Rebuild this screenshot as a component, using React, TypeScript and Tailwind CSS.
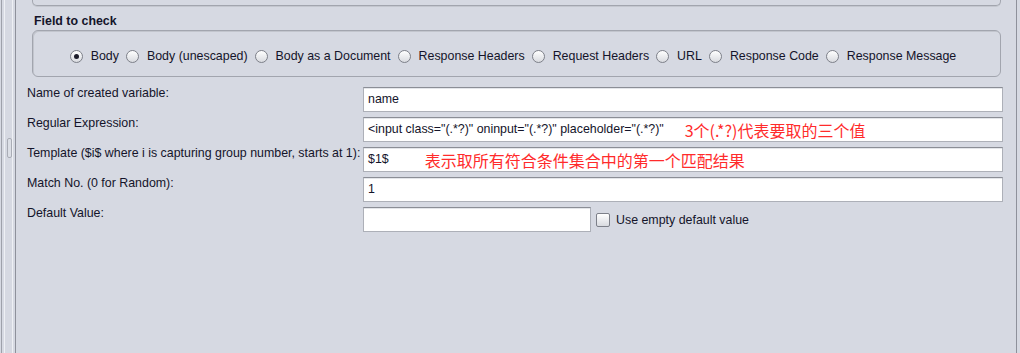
import React from 'react'

const fields = [
  'Body',
  'Body (unescaped)',
  'Body as a Document',
  'Response Headers',
  'Request Headers',
  'URL',
  'Response Code',
  'Response Message',
]

const Radio: React.FC<{ checked?: boolean }> = ({ checked }) => (
  <span className="w-[13px] h-[13px] rounded-full border border-[#7d8089] bg-gradient-to-b from-[#ffffff] to-[#d9dbe0] flex items-center justify-center shrink-0">
    {checked && <span className="w-[5px] h-[5px] rounded-full bg-[#1c1c2a]" />}
  </span>
)

const Field: React.FC<{ children?: React.ReactNode; className?: string }> = ({ children, className }) => (
  <div className={"h-[25px] bg-white border border-[#adb0b8] border-t-[#8b8e96] shadow-[inset_0_1px_0_#e4e6ea] flex items-center pl-[4px] whitespace-nowrap overflow-hidden " + (className ?? '')}>
    {children}
  </div>
)

const Note: React.FC<{ children: React.ReactNode; className?: string }> = ({ children, className }) => (
  <span className={"text-[16px] leading-[18px] text-[#ff2b2b] font-['Noto_Sans_CJK_SC','Liberation_Sans',sans-serif] " + (className ?? '')}>
    {children}
  </span>
)

const App: React.FC = () => {
  return (
    <div className="w-[1020px] h-[353px] bg-[#d6d9e2] flex overflow-hidden font-['Liberation_Sans',Arial,sans-serif] text-[12.4px] text-[#14142a]">
      {/* split pane edge */}
      <div className="w-[17px] h-full flex relative shrink-0">
        <div className="w-[1px]" />
        <div className="w-[1px] bg-[#9ea1aa]" />
        <div className="w-[2px]" />
        <div className="w-[1px] bg-[#eef0f4]" />
        <div className="w-[7px]" />
        <div className="w-[1px] bg-[#eef0f4]" />
        <div className="w-[2px]" />
        <div className="w-[1px] bg-[#8e919b]" />
        <div className="w-[1px]" />
        <div className="absolute left-[7px] top-[138px] w-[5px] h-[20px] rounded-[2px] border border-[#a9acb5] bg-[#dcdfe6]" />
      </div>

      <div className="flex-1 flex flex-col">
        <div className="mx-[15px] h-[6px] border-x border-b border-[#a2a5ae] rounded-b-[5px] shadow-[0_1px_0_#c4c7cf]" />

        <div className="ml-[17px] mt-[8px] font-bold leading-[14px]">Field to check</div>

        <div className="mx-[15px] mt-[2px] h-[47px] border border-[#a2a5ae] rounded-[6px] shadow-[inset_1px_1px_0_#c2c5cd] flex items-center justify-center pt-[5px]">
          {fields.map((f, i) => (
            <div key={f} className="flex items-center">
              <Radio checked={i === 0} />
              <span className="ml-[8px] mr-[7px] leading-[14px]">{f}</span>
            </div>
          ))}
        </div>

        <div className="mt-[10px] ml-[10px] mr-[13px] grid grid-cols-[336px_1fr] gap-y-[5px]">
          <div className="leading-[14px] -mt-[1px]">Name of created variable:</div>
          <Field>name</Field>

          <div className="leading-[14px] -mt-[1px]">Regular Expression:</div>
          <Field>
            <span>{'<input class="(.*?)" oninput="(.*?)" placeholder="(.*?)"'}</span>
            <Note className="ml-[21px]">3个(.*?)代表要取的三个值</Note>
          </Field>

          <div className="leading-[14px] -mt-[1px] whitespace-nowrap">Template ($i$ where i is capturing group number, starts at 1):</div>
          <Field>
            <span>$1$</span>
            <Note className="ml-[36px]">表示取所有符合条件集合中的第一个匹配结果</Note>
          </Field>

          <div className="leading-[14px] -mt-[1px]">Match No. (0 for Random):</div>
          <Field>1</Field>

          <div className="leading-[14px] -mt-[1px]">Default Value:</div>
          <div className="flex items-center">
            <Field className="w-[228px]" />
            <span className="ml-[5px] w-[14px] h-[14px] rounded-[2px] border border-[#7d8089] bg-gradient-to-b from-[#ffffff] to-[#d9dbe0]" />
            <span className="ml-[6px] leading-[14px]">Use empty default value</span>
          </div>
        </div>
      </div>

      <div className="w-[4px] h-full flex shrink-0">
        <div className="w-[1px] bg-[#8e919b]" />
        <div className="w-[3px]" />
      </div>
    </div>
  )
}

export default App
